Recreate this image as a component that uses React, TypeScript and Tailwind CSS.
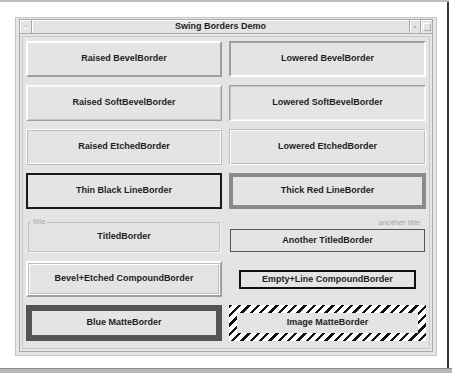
import React from 'react';

const cell = 'h-[36px] flex items-center justify-center text-[9px] font-bold text-[#1e1e1e] bg-[#e4e4e4]';

const raised = 'border-2 border-t-white border-l-white border-r-[#9e9e9e] border-b-[#9e9e9e]';
const lowered = 'border-2 border-t-[#9e9e9e] border-l-[#9e9e9e] border-r-white border-b-white';
const softRaised =
  'border border-t-white border-l-white border-r-[#9e9e9e] border-b-[#9e9e9e] shadow-[inset_1px_1px_0_#f4f4f4,inset_-1px_-1px_0_#c4c4c4]';
const softLowered =
  'border border-t-[#9e9e9e] border-l-[#9e9e9e] border-r-white border-b-white shadow-[inset_1px_1px_0_#c4c4c4,inset_-1px_-1px_0_#f4f4f4]';
const etchedRaised =
  'border border-t-white border-l-white border-r-[#bdbdbd] border-b-[#bdbdbd] shadow-[inset_1px_1px_0_#bdbdbd,inset_-1px_-1px_0_#ffffff]';
const etchedLowered =
  'border border-t-[#bdbdbd] border-l-[#bdbdbd] border-r-white border-b-white shadow-[inset_1px_1px_0_#ffffff,inset_-1px_-1px_0_#bdbdbd]';

const TitleBar: React.FC = () => (
  <div className="h-[14px] flex border-b border-[#a9a9a9] bg-[#e4e4e4]">
    <div className="w-[12px] border-r border-[#a9a9a9] flex items-center justify-center shadow-[inset_1px_1px_0_#fff]">
      <div className="w-[5px] h-[2px] bg-[#c4c4c4] border-b border-[#fff]" />
    </div>
    <div className="flex-1 flex items-center justify-center text-[9px] font-bold text-[#1e1e1e] shadow-[inset_1px_1px_0_#fff]">
      Swing Borders Demo
    </div>
    <div className="w-[11px] border-l border-[#a9a9a9] flex items-center justify-center shadow-[inset_1px_1px_0_#fff]">
      <div className="w-[2px] h-[2px] bg-[#b5b5b5]" />
    </div>
    <div className="w-[12px] border-l border-[#a9a9a9] flex items-center justify-center shadow-[inset_1px_1px_0_#fff]">
      <div className="w-[8px] h-[8px] border border-t-white border-l-white border-r-[#a9a9a9] border-b-[#a9a9a9]" />
    </div>
  </div>
);

export default function App() {
  return (
    <div className="w-[452px] h-[373px] bg-white flex flex-col font-['Liberation_Sans',Arial,sans-serif]">
      <div className="h-[2px] bg-[#bdbdbd] mr-[3px]" />
      <div className="flex flex-1">
        <div className="flex-1 pl-[15px] pt-[15px]">
          {/* window frame */}
          <div className="w-[422px] h-[339px] border border-[#c6c6c6] bg-[#e6e6e6] pt-[1px] px-[3px] pb-[3px] flex flex-col">
            <div className="flex-1 border border-[#a9a9a9] flex flex-col">
              <TitleBar />
              <div className="flex-1 m-[2px] border border-[#c8c8c8] bg-[#e4e4e4] pt-[4px] pl-[3px]">
                <div className="grid grid-cols-[196px_197px] gap-x-[7px] gap-y-[8px]">
                  <div className={`${cell} ${raised}`}>Raised BevelBorder</div>
                  <div className={`${cell} ${lowered}`}>Lowered BevelBorder</div>

                  <div className={`${cell} ${softRaised}`}>Raised SoftBevelBorder</div>
                  <div className={`${cell} ${softLowered}`}>Lowered SoftBevelBorder</div>

                  <div className={`${cell} ${etchedRaised}`}>Raised EtchedBorder</div>
                  <div className={`${cell} ${etchedLowered}`}>Lowered EtchedBorder</div>

                  <div className={`${cell} border-2 border-[#1a1a1a]`}>Thin Black LineBorder</div>
                  <div className={`${cell} border-4 border-[#8a8a8a]`}>Thick Red LineBorder</div>

                  {/* titled border */}
                  <div className="h-[36px] px-[2px] pb-[1px] bg-[#e4e4e4]">
                    <fieldset className="h-full border border-[#c2c2c2] shadow-[1px_1px_0_#f6f6f6] px-[2px]">
                      <legend className="px-[2px] text-[8px] leading-[10px] text-[#ababab]">title</legend>
                      <div className="h-[20px] flex items-center justify-center text-[9px] font-bold text-[#1e1e1e]">
                        TitledBorder
                      </div>
                    </fieldset>
                  </div>
                  <div className="h-[36px] flex flex-col bg-[#e4e4e4] px-[1px] pb-[1px]">
                    <div className="h-[12px] flex items-center justify-end pr-[5px] text-[8px] italic text-[#a5a5a5]">
                      another title
                    </div>
                    <div className="flex-1 border border-[#555] flex items-center justify-center text-[9px] font-bold text-[#1e1e1e]">
                      Another TitledBorder
                    </div>
                  </div>

                  <div className={`h-[36px] bg-[#e4e4e4] ${raised} flex`}>
                    <div className={`flex-1 flex items-center justify-center text-[9px] font-bold text-[#1e1e1e] ${etchedLowered}`}>
                      Bevel+Etched CompoundBorder
                    </div>
                  </div>
                  <div className="h-[36px] bg-[#e4e4e4] pt-[9px] pb-[8px] px-[10px] flex">
                    <div className="flex-1 border-2 border-[#111] flex items-center justify-center text-[9px] font-bold text-[#1e1e1e]">
                      Empty+Line CompoundBorder
                    </div>
                  </div>

                  <div className={`${cell} border-[6px] border-[#545454]`}>Blue MatteBorder</div>
                  <div className="h-[36px] p-[8px] flex bg-[repeating-linear-gradient(135deg,#111_0px,#111_2.4px,#fff_2.4px,#fff_6.6px)]">
                    <div className="flex-1 bg-[#e4e4e4] flex items-center justify-center text-[9px] font-bold text-[#1e1e1e]">
                      Image MatteBorder
                    </div>
                  </div>
                </div>
              </div>
            </div>
          </div>
        </div>
        <div className="w-[2px] bg-[#3a3a3a] mr-[3px]" />
      </div>
      <div className="h-[5px] bg-[#b8b8b8] border-t border-[#8a8a8a]" />
    </div>
  );
}
